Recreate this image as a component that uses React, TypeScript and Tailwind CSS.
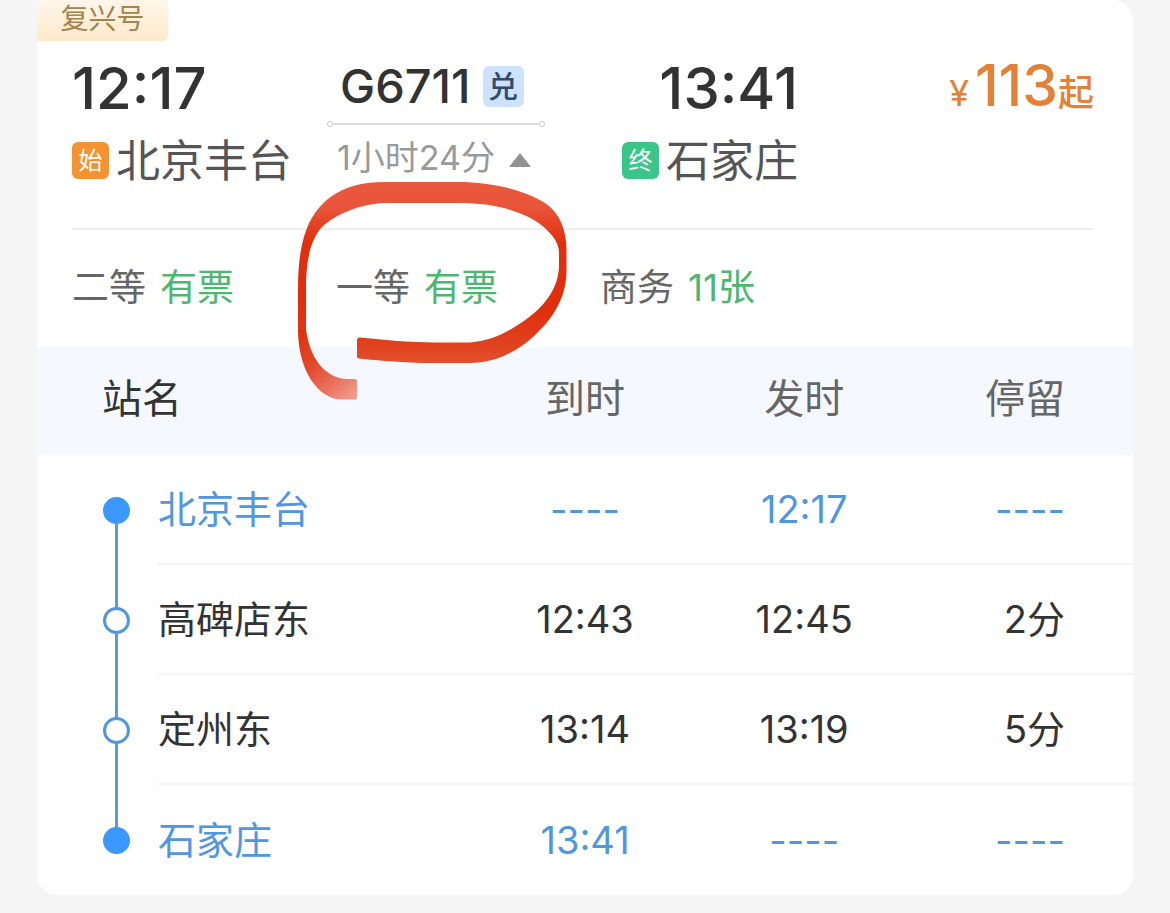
type Stop = { name: string; arrive: string; depart: string; stay: string; end?: 'first' | 'last' };

const seats = [
	{ label: '二等', left: '有票' },
	{ label: '一等', left: '有票', marked: true },
	{ label: '商务', left: '11张' },
];

const stops: Stop[] = [
	{ name: '北京丰台', arrive: '----', depart: '12:17', stay: '----', end: 'first' },
	{ name: '高碑店东', arrive: '12:43', depart: '12:45', stay: '2分' },
	{ name: '定州东', arrive: '13:14', depart: '13:19', stay: '5分' },
	{ name: '石家庄', arrive: '13:41', depart: '----', stay: '----', end: 'last' },
];

function PenMark() {
	return (
		<svg
			className="absolute -left-14 -top-24 z-10 pointer-events-none max-w-none"
			width="310"
			height="250"
			viewBox="0 0 310 250"
			aria-hidden="true">
			<defs>
				<linearGradient id="pen" gradientUnits="userSpaceOnUse" x1="0" y1="12" x2="0" y2="194">
					<stop offset="0" stopColor="#e9583c" />
					<stop offset="0.14" stopColor="#e9553a" />
					<stop offset="0.34" stopColor="#df2f0d" />
					<stop offset="0.72" stopColor="#df300e" />
					<stop offset="0.9" stopColor="#e04220" />
					<stop offset="1" stopColor="#e4522f" />
				</linearGradient>
				<linearGradient id="tail" gradientUnits="userSpaceOnUse" x1="22" y1="160" x2="77" y2="222">
					<stop offset="0" stopColor="#df300e" />
					<stop offset="0.4" stopColor="#e2492b" />
					<stop offset="0.75" stopColor="#e97460" />
					<stop offset="1" stopColor="#f0998a" />
				</linearGradient>
			</defs>
			<path
				fill="url(#pen)"
				d="M18 160V118C18 86 23 60 35 43C48 25 68 12 105 12H178C212 12 244 20 265 33C280 43 286.500 60 286.500 80V100C286.500 125 276 146 253 167C235 183 214 193 190 193H140C115 192 92 190 79 188.500Q76.500 188 77 186V170Q77 167 80 167.500C105 170 130 172.500 155 172.500H190C208 171 221 165 233 158C262 141 279 120 279 95V82C279 72 270 60 254 50C234 38 206 33 180 33H105C80 34 56 44 42 57C30 70 26 92 26 118V160Z"
			/>
			<path
				fill="url(#tail)"
				d="M18 159.500C18 200 38 229.500 62 229.500H75Q77 229.500 77 227V211Q77 209 75 209H66C44 207 30 188 26 159.500Z"
			/>
		</svg>
	);
}

function TripHeader() {
	return (
		<div className="flex pt-4 pb-[39px] border-b-2 border-[#efefef]">
			<div className="w-[220px]">
				<div className="text-[58px] leading-[62px] font-medium">12:17</div>
				<div className="mt-3 flex items-center gap-[7px]">
					<span className="size-[37px] shrink-0 rounded-md bg-[#f49331] text-white text-[24px] leading-[37px] text-center">
						始
					</span>
					<span className="pt-0.5 text-[44px] leading-[56px] text-[#555] whitespace-nowrap">北京丰台</span>
				</div>
			</div>
			<div className="ml-[35px] w-[218px]">
				<div className="mt-1 pl-[13px] flex items-center gap-3">
					<span className="text-[47px] leading-[50px] font-medium">G6711</span>
					<span className="size-[41px] shrink-0 rounded-md bg-[#cce2fd] text-[#334a6b] text-[30px] leading-[41px] font-medium text-center">
						兑
					</span>
				</div>
				<div className="mt-2.5 flex items-center">
					<span className="size-1.5 rounded-full border border-[#c9c9c9]" />
					<span className="grow h-0.5 bg-[#dcdcdc]" />
					<span className="size-1.5 rounded-full border border-[#c9c9c9]" />
				</div>
				<button
					type="button"
					aria-label="经停站"
					className="mt-2 pl-2.5 flex items-center gap-3.5 text-[34px] leading-[46px] text-[#999] whitespace-nowrap">
					<span>1小时24分</span>
					<svg width="22" height="14" viewBox="0 0 22 14" className="shrink-0 mt-1">
						<path d="M11 0 22 14H0Z" fill="#929292" />
					</svg>
				</button>
			</div>
			<div className="ml-[77px]">
				<div className="text-[58px] leading-[62px] font-medium text-right">13:41</div>
				<div className="mt-3 flex items-center gap-[7px]">
					<span className="size-[37px] shrink-0 rounded-md bg-[#39c688] text-white text-[24px] leading-[37px] text-center">
						终
					</span>
					<span className="pt-0.5 text-[44px] leading-[56px] text-[#555] whitespace-nowrap">石家庄</span>
				</div>
			</div>
			<div className="ml-auto flex items-baseline text-[#e58037] leading-[58px] font-medium whitespace-nowrap">
				<span className="mr-1.5 text-[36px] font-normal">¥</span>
				<span className="text-[57px]">113</span>
				<span className="text-[36px]">起</span>
			</div>
		</div>
	);
}

function StopRow({ stop }: { stop: Stop }) {
	const line = stop.end === 'first' ? 'top-1/2 bottom-0' : stop.end === 'last' ? 'top-0 bottom-1/2' : 'inset-y-0';
	const border = stop.end === 'last' ? '' : 'border-b-2 border-[#f4f4f4]';
	return (
		<tr className={`h-[110px] ${stop.end ? 'text-[#4f97de]' : 'text-[#333]'}`}>
			<td className="relative p-0">
				<span className={`absolute left-[78px] w-[3px] bg-[#5a9bd8] ${line}`} />
				<span
					className={`relative block ml-[66px] size-[27px] rounded-full border-3 ${
						stop.end ? 'bg-[#3b98fc] border-[#3b98fc]' : 'bg-white border-[#4f97de]'
					}`}
				/>
			</td>
			<td className={`p-0 text-left ${border}`}>{stop.name}</td>
			<td className={`p-0 text-center ${border}`}>{stop.arrive}</td>
			<td className={`p-0 text-center ${border}`}>{stop.depart}</td>
			<td className={`p-0 pr-[68px] text-right ${border}`}>{stop.stay}</td>
		</tr>
	);
}

export default function App() {
	return (
		<div className="min-h-screen bg-[#f5f5f5] px-[37px] pb-[17px] font-['Inter','Noto_Sans_CJK_SC',sans-serif] text-[#333]">
			<div className="bg-white rounded-b-[20px] rounded-tr-[20px] rounded-tl-lg overflow-hidden">
				<div className="w-[131px] h-[41px] rounded-br-md bg-linear-to-b from-[#fff6ea] to-[#ffe9cb] text-[28px] leading-[39px] text-center text-[#a5834c]">
					复兴号
				</div>
				<div className="pl-[35px] pr-[39px]">
					<TripHeader />
					<div className="flex pt-9 pb-[37px]">
						{seats.map((seat) => (
							<div key={seat.label} className="relative w-66 flex gap-3.5 text-[37px] leading-[44px] whitespace-nowrap">
								<span className="text-[#666]">{seat.label}</span>
								<span className="text-[#4db670]">{seat.left}</span>
								{seat.marked && <PenMark />}
							</div>
						))}
					</div>
				</div>
				<table className="w-full table-fixed border-separate border-spacing-0 text-[38px] leading-[48px] whitespace-nowrap">
					<thead>
						<tr className="h-[108px] bg-[#f5f8ff] text-[40px] text-[#666]">
							<th className="w-[121px] p-0" />
							<th className="p-0 pb-1 text-left font-normal text-[#333]">
								<span className="-ml-14">站名</span>
							</th>
							<th className="w-1/5 p-0 pb-1 text-center font-normal">到时</th>
							<th className="w-1/5 p-0 pb-1 text-center font-normal">发时</th>
							<th className="w-1/5 p-0 pr-[68px] pb-1 text-right font-normal">停留</th>
						</tr>
					</thead>
					<tbody>
						{stops.map((stop) => (
							<StopRow key={stop.name} stop={stop} />
						))}
					</tbody>
				</table>
			</div>
		</div>
	);
}
